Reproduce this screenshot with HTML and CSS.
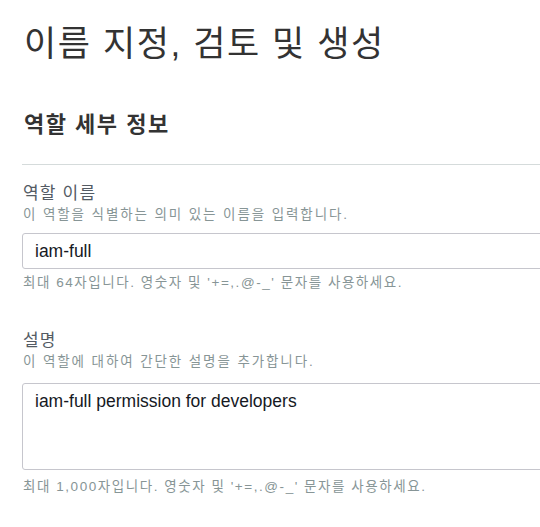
FILE: index.html
```html
<!DOCTYPE html>
<html lang="ko">
<head>
<meta charset="utf-8">
<link rel="stylesheet" href="styles.css">
</head>
<body>
<main class="page">
  <h1 class="title">이름 지정, 검토 및 생성</h1>
  <section class="section">
    <h2 class="section-title">역할 세부 정보</h2>
    <div class="field">
      <div class="label">역할 이름</div>
      <div class="desc">이 역할을 식별하는 의미 있는 이름을 입력합니다.</div>
      <div class="input">iam-full</div>
      <div class="hint">최대 64자입니다. 영숫자 및 '+=,.@-_' 문자를 사용하세요.</div>
    </div>
    <div class="field field-next">
      <div class="label">설명</div>
      <div class="desc">이 역할에 대하여 간단한 설명을 추가합니다.</div>
      <div class="textarea">iam-full permission for developers</div>
      <div class="hint hint-gap">최대 1,000자입니다. 영숫자 및 '+=,.@-_' 문자를 사용하세요.</div>
    </div>
  </section>
</main>
</body>
</html>
```

FILE: styles.css
```css
html, body {
  margin: 0;
  padding: 0;
  background: #fff;
  overflow: hidden;
}
body {
  font-family: "Liberation Sans", "Noto Sans CJK KR", sans-serif;
  color: #16191f;
}
.page {
  width: 600px;
  padding: 22px 0 0 22px;
}
.title {
  margin: 0;
  font-size: 35px;
  font-weight: 400;
  letter-spacing: 1.6px;
  line-height: 44px;
  color: #333;
  padding-left: 2px;
}
.section {
  margin-top: 44px;
}
.section-title {
  margin: 0;
  font-size: 22px;
  font-weight: 700;
  letter-spacing: 1.5px;
  line-height: 30px;
  color: #333;
  padding-left: 2px;
  padding-bottom: 24px;
  border-bottom: 1px solid #d5dbdb;
}
.field {
  padding-top: 18px;
}
.field-next {
  padding-top: 37px;
}
.label {
  font-size: 17px;
  letter-spacing: 1.2px;
  line-height: 22px;
  color: #545b64;
  padding-left: 1px;
}
.desc {
  font-size: 13.5px;
  letter-spacing: 1.9px;
  line-height: 20px;
  color: #879596;
  padding-left: 1px;
}
.input {
  margin-top: 8px;
  height: 34px;
  border: 1px solid #c6c6cd;
  border-radius: 3px;
  font-family: "Liberation Sans", sans-serif;
  font-size: 17.5px;
  line-height: 34px;
  padding-left: 12px;
  color: #16191f;
}
.textarea {
  margin-top: 11px;
  height: 87px;
  box-sizing: border-box;
  border: 1px solid #c6c6cd;
  border-radius: 3px;
  font-family: "Liberation Sans", sans-serif;
  font-size: 17.5px;
  line-height: 22px;
  padding: 6px 0 0 12px;
  color: #16191f;
}
.hint {
  margin-top: 4px;
  font-size: 13.5px;
  letter-spacing: 1.55px;
  line-height: 20px;
  color: #879596;
  padding-left: 1px;
}
.hint-gap {
  margin-top: 7px;
}
```
